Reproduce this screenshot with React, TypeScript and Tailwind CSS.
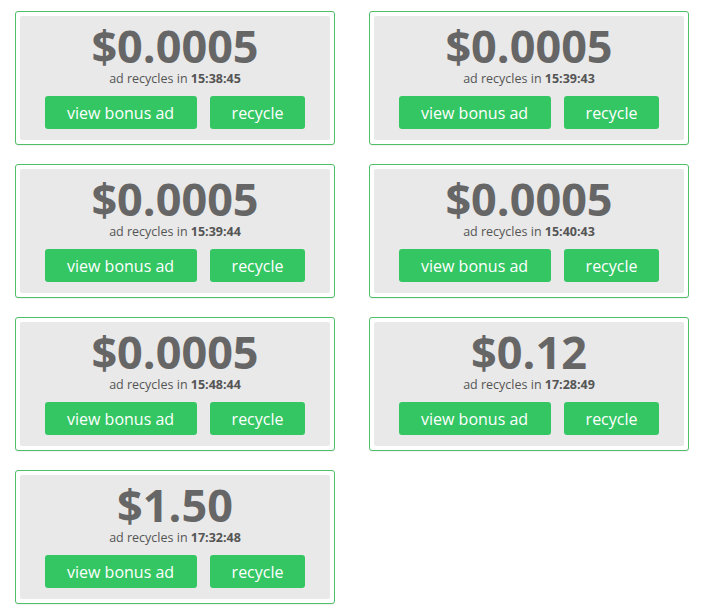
import React from "react";

const ads = [
  { price: "$0.0005", time: "15:38:45" },
  { price: "$0.0005", time: "15:39:43" },
  { price: "$0.0005", time: "15:39:44" },
  { price: "$0.0005", time: "15:40:43" },
  { price: "$0.0005", time: "15:48:44" },
  { price: "$0.12", time: "17:28:49" },
  { price: "$1.50", time: "17:32:48" },
];

function AdCard({ price, time }: { price: string; time: string }) {
  return (
    <div className="w-[320px] h-[134px] border border-[#4fbf68] rounded-[3px] bg-white p-[4px] shadow-[0_1px_1px_rgba(0,0,0,0.06)]">
      <div className="h-full bg-[#e9e9e9] rounded-[2px] flex flex-col items-center pt-[7px]">
        <div className="text-[45px] leading-[45px] font-bold text-[#666666]">{price}</div>
        <div className="text-[12.5px] leading-[18px] text-[#555555] mt-[2px]">
          ad recycles in <span className="font-bold">{time}</span>
        </div>
        <div className="flex gap-[13px] mt-[8px]">
          <button className="h-[33px] px-[22.5px] rounded-[3px] bg-[#33c663] text-white text-[16px] leading-[22px]">
            view bonus ad
          </button>
          <button className="h-[33px] px-[22px] rounded-[3px] bg-[#33c663] text-white text-[16px] leading-[22px]">
            recycle
          </button>
        </div>
      </div>
    </div>
  );
}

export default function App() {
  return (
    <div
      className="w-[705px] h-[613px] bg-white pl-[15px] pt-[11px]"
      style={{ fontFamily: '"Open Sans", "Liberation Sans", sans-serif' }}
    >
      <div className="grid grid-cols-[320px_320px] gap-x-[34px] gap-y-[19px]">
        {ads.map((a, i) => (
          <AdCard key={i} price={a.price} time={a.time} />
        ))}
      </div>
    </div>
  );
}
